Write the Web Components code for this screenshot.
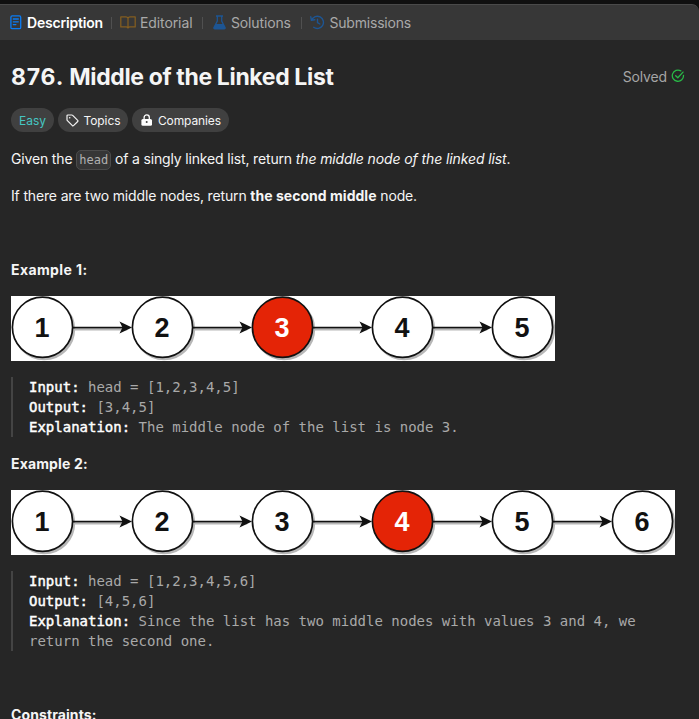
<!DOCTYPE html>
<html lang="en">
<head>
<meta charset="utf-8">
<title>876. Middle of the Linked List</title>
<style>
html, body { margin: 0; height: 100%; background: #101010; overflow: hidden; }
body { font-family: Inter, "Liberation Sans", sans-serif; color: #f5f5f5; }
</style>
</head>
<body>
<problem-panel>
  <tab-bar slot="tabs">
    <panel-tab icon="doc" active style="--iw:14px;--w:76px;--ls:-.2px">Description</panel-tab>
    <panel-tab icon="book" style="--w:54px;--ls:-.1px">Editorial</panel-tab>
    <panel-tab icon="flask" style="--w:61.5px;--ls:-.14px">Solutions</panel-tab>
    <panel-tab icon="history" style="--w:82px;--ls:-.2px">Submissions</panel-tab>
  </tab-bar>
  <problem-title><span style="letter-spacing:.8px">876.</span> Middle of the Linked List</problem-title>
  <pill-row>
    <tag-pill tone="easy">Easy</tag-pill>
    <tag-pill icon="tag">Topics</tag-pill>
    <tag-pill icon="lock">Companies</tag-pill>
  </pill-row>
  <text-line style="--gap:16px"><span>Given the </span><inline-code>head</inline-code><span> of a singly linked list, return </span><em>the middle node of the linked list</em>.</text-line>
  <text-line style="--gap:53px"><span>If there are two middle nodes, return </span><b>the second middle</b><span> node.</span></text-line>
  <text-line style="--gap:16px;--bls:.4px"><b>Example 1:</b></text-line>
  <linked-list count="5" mark="3"></linked-list>
  <example-block><b>Input:</b> head = [1,2,3,4,5]
<b>Output:</b> [3,4,5]
<b>Explanation:</b> The middle node of the list is node 3.</example-block>
  <text-line style="--gap:16px;--bls:.15px"><b>Example 2:</b></text-line>
  <linked-list count="6" mark="4"></linked-list>
  <example-block style="--gap:53px"><b>Input:</b> head = [1,2,3,4,5,6]
<b>Output:</b> [4,5,6]
<b>Explanation:</b> Since the list has two middle nodes with values 3 and 4, we return the second one.</example-block>
  <text-line style="--bls:.1px"><b>Constraints:</b></text-line>
</problem-panel>
<script>
const icons = {
  doc: '<svg width="12" height="15" viewBox="0 0 12 15" fill="none" stroke="#0a7cf5" stroke-width="1.3" stroke-linecap="round"><rect x=".9" y=".9" width="9.8" height="12.8" rx="1.3"/><path d="M3.3 4h5M3.3 6.8h5M3.3 9.6h2.6"/></svg>',
  book: '<svg width="16" height="13" viewBox="0 0 16 13" fill="none" stroke="#845e20" stroke-width="1.25" stroke-linejoin="round"><path d="M8 2.2C7.6 1.3 7 .9 6 .9H.8v10H6c1 0 1.6.3 2 1.100C8.400 11.200 9 10.900 10 10.900h5.200V.9H10C9 .9 8.400 1.300 8 2.200zM8 2.200V12"/></svg>',
  flask: '<svg width="13" height="15" viewBox="0 0 13 15"><path d="M3 1h7M4.300 1v5L1 12.400Q.6 13.800 2 13.800h9Q12.400 13.800 12 12.400L8.700 6V1" fill="none" stroke="#1d5593" stroke-width="1.300"/><path d="M2.700 9h7.600l2 3.700q.4 1.300-1 1.300H1.700q-1.400 0-1-1.300z" fill="#1d5593"/></svg>',
  history: '<svg width="15" height="15" viewBox="0 0 15 15" fill="none" stroke="#1d5593" stroke-width="1.400" stroke-linecap="round" stroke-linejoin="round"><path d="M1.700 5.100A6.100 6.100 0 1 1 3.700 12.300M.8 1.800L1.400 5.300 4.800 4.800M7.500 4.300V7.700L9.800 9"/></svg>',
  tag: '<svg width="13" height="13" viewBox="0 0 13 13" fill="none" stroke="#f3f3f3" stroke-width="1.200" stroke-linejoin="round"><path d="M1 1.900Q1 1 1.900 1H5.800Q6.300 1 6.700 1.400L11.700 6.400Q12.200 7 11.700 7.500L7.500 11.700Q7 12.200 6.400 11.700L1.400 6.700Q1 6.300 1 5.800z"/><circle cx="3.700" cy="3.700" r=".8" fill="#f3f3f3" stroke="none"/></svg>',
  lock: '<svg width="13" height="12" viewBox="-.8 0 13 12"><path d="M3.300 5.500V3.500a2.600 2.600 0 0 1 5.200 0v2" fill="none" stroke="#fff" stroke-width="1.300"/><rect x=".6" y="4.900" width="10.600" height="6.800" rx="1.500" fill="#fff"/><circle cx="5.900" cy="8.100" r="1" fill="#444"/></svg>',
  check: '<svg width="14" height="14" viewBox="0 0 14 14" fill="none" stroke="#28b846" stroke-width="1.300" stroke-linecap="round" stroke-linejoin="round"><path d="M9.800 1.900A5.600 5.600 0 1 0 12.500 6.300M4.700 6.700L6.800 8.800 12 3.100"/></svg>'
};
function define(name, css, html) {
  customElements.define(name, class extends HTMLElement {
    connectedCallback() {
      if (this.shadowRoot) return;
      const body = typeof html === 'function' ? html(this) : html;
      this.attachShadow({ mode: 'open' }).innerHTML = `<style>${css}</style>${body}`;
    }
  });
}
define('problem-panel', `
  :host { display: flex; flex-direction: column; margin-top: 4px; height: 715px; overflow: hidden; background: #262626; border-radius: 0 7px 0 0; }
  main { display: flex; flex-direction: column; align-items: flex-start; padding: 21px 11px 0; }
`, '<slot name="tabs"></slot><main><slot></slot></main>');
define('tab-bar', `
  :host { display: flex; align-items: center; box-sizing: border-box; height: 36px; padding: 0 0 0 9px; background: #373737; border-top: 1px solid #4a4a4a; border-radius: 0 7px 0 0; flex: none; }
`, '<slot></slot>');
define('panel-tab', `
  :host { display: flex; align-items: center; font-size: 14px; line-height: 20px; color: #a9a9a9; white-space: nowrap; }
  :host([active]) { color: #fff; font-weight: 600; }
  :host(:not(:last-child))::after { content: ""; width: 1px; height: 12px; margin: 0 8px; background: #505050; }
  i { display: flex; justify-content: center; width: var(--iw, 16px); margin-right: 4px; }
  span { display: block; width: var(--w); letter-spacing: var(--ls, 0); }
`, el => `<i>${icons[el.getAttribute('icon')]}</i><span><slot></slot></span>`);
define('problem-title', `
  :host { display: flex; align-items: center; justify-content: space-between; align-self: stretch; height: 32px; margin: 0 3px 15px 0; }
  h1 { margin: 0; font-size: 23px; line-height: 32px; font-weight: 650; letter-spacing: -.36px; white-space: nowrap; }
  div { display: flex; align-items: center; gap: 4px; margin-top: -2px; font-size: 14px; letter-spacing: -.15px; color: #a5a5a5; }
`, `<h1><slot></slot></h1><div><span>Solved</span>${icons.check}</div>`);
define('pill-row', ':host { display: flex; gap: 4px; margin-bottom: 16px; height: 24px; }', '<slot></slot>');
define('tag-pill', `
  :host { display: flex; align-items: center; gap: 5px; padding: 0 7.5px 0 8px; height: 24px; border-radius: 12px; background: #404040; color: #f5f5f5; font-size: 12px; letter-spacing: -.1px; }
  :host([tone=easy]) { color: #46c6c2; letter-spacing: 0; }
  svg { display: block; }
`, el => `${icons[el.getAttribute('icon')] || ''}<span><slot></slot></span>`);
define('text-line', `
  :host { display: block; height: 21px; line-height: 21px; font-size: 14px; margin-bottom: var(--gap, 0); letter-spacing: -.155px; white-space: nowrap; }
  ::slotted(b) { font-weight: 700; letter-spacing: var(--bls, .03px); }
  ::slotted(em) { letter-spacing: -.11px; }
`, '<slot></slot>');
define('inline-code', `
  :host { display: inline-block; box-sizing: border-box; height: 20px; line-height: 18px; padding: 0 2px; border: 1px solid #4b4b4b; border-radius: 5px; background: #363636; color: #b0b0b0; font-family: "DejaVu Sans Mono", monospace; font-size: 12px; letter-spacing: 0; vertical-align: middle; }
`, '<slot></slot>');
define('example-block', `
  :host { display: block; align-self: stretch; box-sizing: border-box; border-left: 2px solid #444; padding-left: 16px; margin: 16px 0 var(--gap, 16px); font: 14px/20px "DejaVu Sans Mono", monospace; letter-spacing: -.003px; color: #a9a9a9; white-space: pre-wrap; }
  ::slotted(b) { color: #fff; font-weight: 400; -webkit-text-stroke: .45px #fff; }
`, '<slot></slot>');
define('linked-list', `
  :host { display: block; background: #fff; height: 65px; }
  svg { display: block; }
  text { font: 700 27px "Liberation Sans", Arial, sans-serif; text-anchor: middle; }
`, el => {
  const n = +el.getAttribute('count'), mark = +el.getAttribute('mark'), w = 120 * n - 56;
  let links = '', heads = '', nodes = '', labels = '';
  for (let k = 0; k < n; k++) {
    const x = 31.5 + 120 * k;
    if (k < n - 1) {
      links += `<path d="M${x + 30} 31.600H${x + 83}"/>`;
      heads += `<path d="M${x + 89.500} 31.600l-12.500-6 3 6-3 6z"/>`;
    }
    nodes += `<circle cx="${x}" cy="31.300" r="30.100" fill="${k + 1 === mark ? '#e42406' : '#fff'}"/>`;
    labels += `<text x="${x - .5}" y="40.700" fill="${k + 1 === mark ? '#fff' : '#111'}">${k + 1}</text>`;
  }
  return `<svg width="${w}" height="65" viewBox="0 0 ${w} 65">
    <g opacity=".28" transform="translate(1.700 2)" stroke="#000" stroke-width="1.800">${links}${nodes.replace(/fill="[^"]*"/g, 'fill="#000"')}</g>
    <g stroke="#111" stroke-width="1.700">${links}${nodes}</g><g fill="#111">${heads}</g>
    ${labels}</svg>`;
});
</script>
</body>
</html>
